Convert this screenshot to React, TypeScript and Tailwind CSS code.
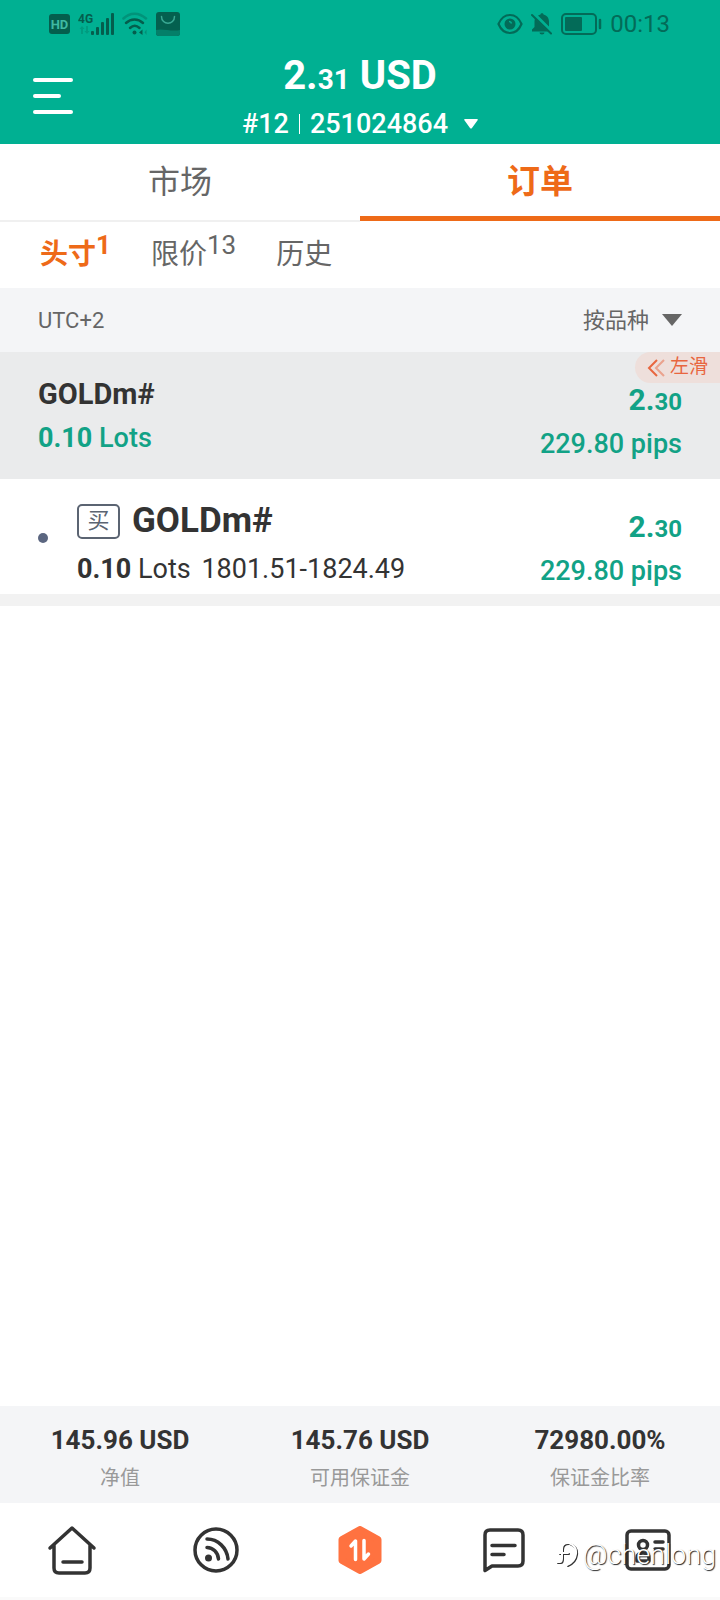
import { useState } from "react";

const stats = [
  { label: "净值", value: "145.96 USD" },
  { label: "可用保证金", value: "145.76 USD" },
  { label: "保证金比率", value: "72980.00%" },
];

const filters = [
  { id: "positions", label: "头寸", count: 1 },
  { id: "limits", label: "限价", count: 13 },
  { id: "history", label: "历史", count: 0 },
];

function StatusBar() {
  return (
    <div className="flex h-12 items-center justify-between pl-[49px] pr-[50px] text-[#036b58]">
      <div className="flex items-center gap-2">
        <span className="flex h-5 w-[21px] items-center justify-center rounded-[3px] bg-[#045e4d] text-[13px] font-bold leading-none text-[#3fb9a2]">HD</span>
        <svg width="36" height="24" viewBox="0 0 36 24" fill="#045e4d">
          <text x="0" y="11" fontSize="12" fontWeight="700" fontFamily="Roboto, sans-serif">4G</text>
          <path d="M4 14l-2.500 3h1.500v5h2v-5h1.500zM9 22l-2.500-3h1.500v-5h2v5h1.500z" opacity=".25" />
          <rect x="13" y="19" width="3" height="4" rx="1" />
          <rect x="18" y="15" width="3" height="8" rx="1" />
          <rect x="23" y="10" width="3" height="13" rx="1" />
          <rect x="28" y="6" width="3" height="17" rx="1" />
          <rect x="33" y="1" width="3" height="22" rx="1" />
        </svg>
        <svg width="26" height="24" viewBox="0 0 26 24" fill="none" stroke="#045e4d" strokeWidth="2.500" strokeLinecap="round">
          <path d="M1.500 6.500C8 0 17 0 24 6.500" opacity=".35" />
          <path d="M4 11c5-4.600 12-4.600 17 0" />
          <path d="M8 16c3-2.800 6.500-2.800 9.500 0" />
          <circle cx="12.500" cy="20.500" r="2" fill="#045e4d" stroke="none" />
          <path d="M17 20.500l3.500-3v5.500z" fill="#045e4d" stroke="none" />
          <path d="M24.500 17.500v5.500l-2-2.700z" fill="#045e4d" stroke="none" opacity=".4" />
        </svg>
        <svg width="24" height="24" viewBox="0 0 24 24">
          <rect width="24" height="24" rx="3" fill="#04604f" />
          <path d="M0 18c6-2 16 2 24 0v3a3 3 0 0 1-3 3H3a3 3 0 0 1-3-3z" fill="#047f69" />
          <path d="M5.500 4.500c0 9 13 9 13 0" fill="none" stroke="#3aa893" strokeWidth="1.500" strokeLinecap="round" />
        </svg>
      </div>
      <div className="flex items-center gap-2">
        <svg width="26" height="22" viewBox="0 0 26 22" fill="none" stroke="currentColor" strokeWidth="2.200">
          <path d="M1.500 11C4 5 8 2 13 2s9 3 11.500 9C22 17 18 20 13 20S4 17 1.500 11z" />
          <circle cx="13" cy="11" r="5.500" fill="currentColor" stroke="none" />
          <path d="M12 8.500a2.500 2.500 0 0 1 2.500 2" stroke="#00b092" strokeWidth="1.500" />
        </svg>
        <svg width="22" height="22" viewBox="0 0 22 22" fill="currentColor">
          <path d="M4 5.500l13 13H1v-2l2.500-2.500V9c0-1.300.1-2.400.5-3.500zM7 2.500C8 2 8.700 1.700 9.500 1.500c0-1.800 3-1.800 3 0C16 2.300 18 5 18 9v4.500z" />
          <path d="M8.500 19.500h5a2.500 2 0 0 1-5 0z" />
          <path d="M1 2l19 18.500" stroke="currentColor" strokeWidth="2" strokeLinecap="round" />
        </svg>
        <svg width="41" height="22" viewBox="0 0 41 22" fill="none" stroke="currentColor" strokeWidth="2">
          <rect x="1" y="1" width="34" height="20" rx="4" />
          <rect x="4" y="4" width="17" height="14" rx="1" fill="currentColor" stroke="none" />
          <path d="M39 7v8" strokeWidth="2.500" strokeLinecap="round" />
        </svg>
        <span className="text-[24px] leading-6">00:13</span>
      </div>
    </div>
  );
}

function Profit() {
  return (
    <div className="text-right text-[#12a286]">
      <p className="text-[30px] font-bold leading-9">
        2.<span className="text-[24px]">30</span>
      </p>
      <p className="mt-1 text-[27px] font-medium leading-10">229.80 pips</p>
    </div>
  );
}

export default function App() {
  const [tab, setTab] = useState("orders");
  const [filter, setFilter] = useState("positions");

  return (
    <div className="flex min-h-screen flex-col bg-white font-['Roboto','Noto_Sans_CJK_SC',sans-serif] text-[#333333]">
      <header className="bg-[#00b092] text-white">
        <StatusBar />
        <div className="grid h-24 grid-cols-[1fr_auto_1fr]">
          <button aria-label="菜单" className="mt-[30px] ml-[33px] flex h-9 w-10 flex-col justify-between">
            <span className="h-1 w-10 rounded-full bg-white" />
            <span className="h-1 w-7 rounded-full bg-white" />
            <span className="h-1 w-10 rounded-full bg-white" />
          </button>
          <div className="flex flex-col items-center pt-1">
            <h1 className="text-[40px] font-bold leading-[48px]">
              2.<span className="text-[28px]">31</span> USD
            </h1>
            <button className="flex items-center text-[27px] font-medium leading-10">
              #12
              <span className="mx-[10px] h-5 w-px bg-white" />
              251024864
              <svg className="ml-4" width="14" height="10" viewBox="0 0 14 10" fill="currentColor">
                <path d="M1 0h12q1.500 0 .6 1.200L8 9q-1 1.200-2 0L.4 1.200Q-.5 0 1 0z" />
              </svg>
            </button>
          </div>
        </div>
      </header>

      <div className="flex h-[78px]">
        <button
          onClick={() => setTab("market")}
          className={tab === "market" ? "mb-px flex-1 border-b-[5px] border-[#ee6a18] pt-1 text-[33px] font-bold text-[#ee6a18]" : "flex-1 border-b-2 border-[#f0f0f0] text-[32px] text-[#666666]"}
        >
          市场
        </button>
        <button
          onClick={() => setTab("orders")}
          className={tab === "orders" ? "mb-px flex-1 border-b-[5px] border-[#ee6a18] pt-1 text-[33px] font-bold text-[#ee6a18]" : "flex-1 border-b-2 border-[#f0f0f0] text-[32px] text-[#666666]"}
        >
          订单
        </button>
      </div>

      <div className="flex h-[66px] items-center gap-10 px-10">
        {filters.map((f) => (
          <button
            key={f.id}
            onClick={() => setFilter(f.id)}
            className={filter === f.id ? "flex items-center text-[28px] font-bold text-[#ee6a18]" : "flex items-center text-[28px] text-[#666666]"}
          >
            {f.label}
            {f.count > 0 && <span className="mb-5 text-[26px] leading-8">{f.count}</span>}
          </button>
        ))}
      </div>

      <div className="flex h-16 items-center justify-between bg-[#f4f5f7] px-[38px] text-[22px] text-[#666666]">
        <span>UTC+2</span>
        <label className="flex items-center gap-3">
          <select aria-label="排序" className="appearance-none bg-transparent">
            <option>按品种</option>
          </select>
          <svg width="20" height="12" viewBox="0 0 20 12" fill="currentColor">
            <path d="M0 0h20L10 12z" />
          </svg>
        </label>
      </div>

      <main className="flex-1">
        {/* Symbol summary */}
        <section className="relative flex h-[127px] justify-between bg-[#eaebec] px-[38px]">
          <button className="absolute right-0 top-0 flex h-[31px] items-center gap-1 rounded-l-full bg-[#eedfdb] pl-3 pr-3 text-[19px] text-[#e8663f]">
            <svg width="19" height="18" viewBox="0 0 19 18" fill="none" stroke="currentColor" strokeWidth="2">
              <path d="M10 1L2 9l8 8" />
              <path d="M17 1L9 9l8 8" opacity=".5" />
            </svg>
            左滑
          </button>
          <div className="pt-6">
            <h2 className="text-[29px] font-bold leading-9">GOLDm#</h2>
            <p className="mt-2 text-[27px] font-medium leading-9 text-[#12a286]">
              <b>0.10</b> Lots
            </p>
          </div>
          <div className="pt-[30px]">
            <Profit />
          </div>
        </section>

        {/* Open position */}
        <section className="flex h-[127px] justify-between border-b-[12px] border-[#f2f2f2] px-[38px]">
          <div className="flex">
            <span className="mt-[54px] h-[10px] w-[10px] rounded-full bg-[#5b6680]" />
            <div className="ml-[29px] pt-5">
              <div className="flex items-center gap-3">
                <span className="flex h-[35px] w-[43px] items-center justify-center rounded-[5px] border-2 border-[#5b6472] text-[22px] leading-none text-[#5b6472]">买</span>
                <h2 className="text-[35px] font-bold leading-[44px]">GOLDm#</h2>
              </div>
              <p className="mt-2 text-[27px] leading-9">
                <b>0.10</b> Lots <span className="ml-1">1801.51-1824.49</span>
              </p>
            </div>
          </div>
          <div className="pt-[30px]">
            <Profit />
          </div>
        </section>
      </main>

      <dl className="flex h-[97px] bg-[#f4f5f7] pt-4 text-center">
        {stats.map((s) => (
          <div key={s.label} className="flex flex-1 flex-col-reverse justify-end gap-1">
            <dt className="text-[20px] leading-8 text-[#999999]">{s.label}</dt>
            <dd className="text-[26px] font-bold leading-9">{s.value}</dd>
          </div>
        ))}
      </dl>

      <nav className="relative flex h-[97px] border-b-[3px] border-[#fafafa] text-[#333333]">
        <a href="#home" aria-label="首页" className="flex flex-1 items-center justify-center">
          <svg width="50" height="50" viewBox="0 0 50 50" fill="none" stroke="currentColor" strokeWidth="3.500" strokeLinecap="round" strokeLinejoin="round">
            <path d="M3 23L25 3l22 20M7 20v23q0 5 5 5h26q5 0 5-5V20M16 37h19" />
          </svg>
        </a>
        <a href="#feed" aria-label="资讯" className="flex flex-1 items-center justify-center">
          <svg width="46" height="46" viewBox="0 0 46 46" fill="none" stroke="currentColor" strokeWidth="3.500" strokeLinecap="round">
            <circle cx="23" cy="23" r="21" />
            <path d="M14 12c11 0 20 9 21 20M14 20.500c6 0 11 5 11.500 11.500" />
            <circle cx="15.500" cy="31" r="3.500" fill="currentColor" stroke="none" />
          </svg>
        </a>
        <a href="#trade" aria-label="交易" className="flex flex-1 items-center justify-center">
          <svg width="44" height="48" viewBox="0 0 44 48">
            <path d="M22 3.500L40 13.500v21L22 44.500 4 34.500v-21z" fill="#ff7240" stroke="#ff7240" strokeWidth="7" strokeLinejoin="round" />
            <path d="M13 20l4.500-5v18.500M26 14.500V33l4.500-5" fill="none" stroke="#fff" strokeWidth="3.500" strokeLinecap="round" strokeLinejoin="round" />
          </svg>
        </a>
        <a href="#messages" aria-label="消息" className="flex flex-1 items-center justify-center">
          <svg width="42" height="46" viewBox="0 0 42 46" fill="none" stroke="currentColor" strokeWidth="3.500" strokeLinecap="round" strokeLinejoin="round">
            <path d="M2 43.500V8q0-5 5-5h28q5 0 5 5v26q0 5-5 5H9z" />
            <path d="M9 18.500h23M9 27.500h12" />
          </svg>
        </a>
        <a href="#account" aria-label="账户" className="flex flex-1 items-center justify-center">
          <svg width="46" height="44" viewBox="0 0 46 44" fill="none" stroke="currentColor" strokeWidth="3.500" strokeLinejoin="round">
            <rect x="2" y="3" width="42" height="38" rx="4" />
            <circle cx="18" cy="17" r="4.500" />
            <path d="M12 33v-3q0-5 6-5t6 5v3z" />
            <path d="M30 14h8M30 21h8" strokeLinecap="round" />
          </svg>
        </a>
        <div className="pointer-events-none absolute bottom-6 right-1 flex items-center gap-1 text-[27px] font-light leading-9 text-white [text-shadow:1px_1px_1px_#222]">
          <svg width="22" height="28" viewBox="0 0 22 28" fill="none" strokeLinecap="round">
            <path d="M1 22h3q2 0 2-4V9q0-6 6-6M3 13h9M13 3q8 3 7 11-1 8-9 11" stroke="#333" strokeWidth="2" />
            <path d="M0 21h3q2 0 2-4V8q0-6 6-6M2 12h9M12 2q8 3 7 11-1 8-9 11" stroke="#fff" strokeWidth="2" />
          </svg>
          @chenlong
        </div>
      </nav>
    </div>
  );
}
